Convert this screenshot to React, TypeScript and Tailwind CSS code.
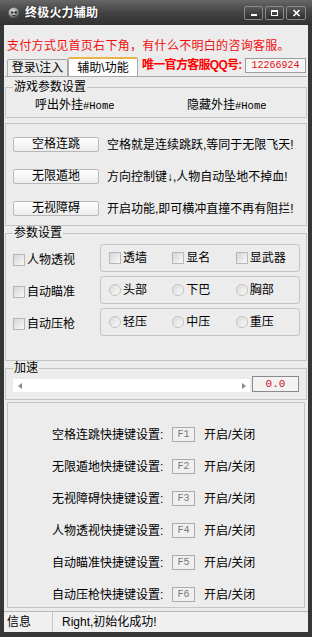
import React from "react";

function GroupHeader({ title }: { title: string }) {
  return (
    <div className="h-[14px] flex">
      <div className="w-[8px] h-[7px] self-end border-l border-t border-[#c4c4c4]" />
      <span className="px-[1px] leading-[14px] text-[12px] whitespace-nowrap">{title}</span>
      <div className="flex-1 h-[7px] self-end border-t border-r border-[#c4c4c4]" />
    </div>
  );
}

function Check() {
  return (
    <span className="inline-block w-[12px] h-[12px] shrink-0 border border-[#b8b8b8] bg-linear-to-br from-[#d6d6d6] to-[#f9f9f9]" />
  );
}

function Radio() {
  return (
    <span className="inline-block w-[12px] h-[12px] shrink-0 rounded-full border border-[#c2c2c2] bg-linear-to-br from-[#dadada] to-[#fbfbfb]" />
  );
}

function WinBtn({ children, w }: { children: React.ReactNode; w: string }) {
  return (
    <div
      className={
        w +
        " h-[14px] rounded-[2px] border border-[#8a8a8a] bg-linear-to-b from-[#585858] to-[#2f2f2f] flex items-center justify-center"
      }
    >
      {children}
    </div>
  );
}

export default function App() {
  const features = [
    ["空格连跳", "空格就是连续跳跃,等同于无限飞天!"],
    ["无限遁地", "方向控制键↓,人物自动坠地不掉血!"],
    ["无视障碍", "开启功能,即可横冲直撞不再有阻拦!"],
  ];
  const params: [string, string[], boolean][] = [
    ["人物透视", ["透墙", "显名", "显武器"], true],
    ["自动瞄准", ["头部", "下巴", "胸部"], false],
    ["自动压枪", ["轻压", "中压", "重压"], false],
  ];
  const hotkeys = [
    ["空格连跳快捷键设置:", "F1"],
    ["无限遁地快捷键设置:", "F2"],
    ["无视障碍快捷键设置:", "F3"],
    ["人物透视快捷键设置:", "F4"],
    ["自动瞄准快捷键设置:", "F5"],
    ["自动压枪快捷键设置:", "F6"],
  ];

  return (
    <div className="w-[312px] h-[637px] bg-[#363636] flex flex-col overflow-hidden font-['Liberation_Sans','Noto_Sans_CJK_SC',sans-serif] text-[12px] leading-[14px] text-black">
      {/* Title bar */}
      <div className="h-[25px] shrink-0 flex items-center bg-linear-to-b from-[#676767] via-[#434343] to-[#323232]">
        <div className="ml-[8px] w-[12px] h-[12px]">
          <svg width="12" height="12" viewBox="0 0 12 12">
            <defs>
              <radialGradient id="ig" cx="40%" cy="35%" r="65%">
                <stop offset="0" stopColor="#f2f2f2" />
                <stop offset="0.55" stopColor="#a0a0a0" />
                <stop offset="1" stopColor="#3a3a3a" />
              </radialGradient>
            </defs>
            <circle cx="6" cy="6" r="5.6" fill="url(#ig)" />
            <circle cx="4.3" cy="5.4" r="1.2" fill="#222" />
            <circle cx="7.7" cy="5.4" r="1.2" fill="#222" />
            <rect x="4.5" y="8" width="3" height="1.2" fill="#333" />
          </svg>
        </div>
        <span className="ml-[5px] text-white font-bold text-[12px] leading-[14px] tracking-[0.2px] [text-shadow:0_0_2px_rgba(0,0,0,0.6)]">
          终极火力辅助
        </span>
        <div className="ml-auto mr-[6px] flex items-center gap-[2px] pt-[1px]">
          <WinBtn w="w-[19px]">
            <svg width="8" height="8" viewBox="0 0 8 8">
              <rect x="1" y="5" width="6" height="2" fill="#fff" />
            </svg>
          </WinBtn>
          <WinBtn w="w-[19px]">
            <svg width="9" height="8" viewBox="0 0 9 8">
              <rect x="1.5" y="1.5" width="6" height="5" fill="none" stroke="#fff" strokeWidth="1" />
              <rect x="1" y="1" width="7" height="2" fill="#fff" />
            </svg>
          </WinBtn>
          <WinBtn w="w-[20px]">
            <svg width="9" height="8" viewBox="0 0 9 8">
              <path d="M1.5 1 L7.5 7 M7.5 1 L1.5 7" stroke="#fff" strokeWidth="1.7" />
            </svg>
          </WinBtn>
        </div>
      </div>

      {/* Client */}
      <div className="mx-[4px] h-[607px] shrink-0 bg-[#ececec] flex flex-col">
        <div className="h-[32px] pl-[3px] pt-[14px] text-[#f20d0d] text-[12px] leading-[14px] tracking-[0.3px] whitespace-nowrap">
          支付方式见首页右下角，有什么不明白的咨询客服。
        </div>

        {/* Tabs */}
        <div className="h-[19px] flex items-end">
          <div className="ml-[3px] w-[61px] h-[17px] border border-b-0 border-[#a8a8a8] bg-[#ececec] rounded-t-[2px] flex items-center justify-center whitespace-nowrap">
            {"登录\\注入"}
          </div>
          <div className="w-[70px] h-[19px] border border-b-0 border-[#a8a8a8] border-t-[#e8b54a] border-t-[2px] bg-white rounded-t-[2px] flex items-center justify-center whitespace-nowrap">
            {"辅助\\功能"}
          </div>
          <div className="self-start mt-[1px] ml-[4px] w-[101px] h-[15px] font-bold text-[#f00] leading-[15px] tracking-[-0.7px] whitespace-nowrap">
            唯一官方客服QQ号:
          </div>
          <div className="self-start mt-[1px] ml-[2px] w-[61px] h-[15px] border border-[#9c9c9c] bg-[#f6f6f6] flex items-center justify-center text-[#e01010] font-['Liberation_Mono',monospace] text-[10px] leading-[13px]">
            12266924
          </div>
        </div>

        {/* Tab panel */}
        <div className="mx-[1px] h-[533px] border-t border-[#a8a8a8] flex flex-col">
          {/* Group A */}
          <div className="mt-[3px]">
            <GroupHeader title="游戏参数设置" />
            <div className="h-[24px] border-l border-r border-b border-[#c4c4c4] flex items-center pl-[29px]">
              <div className="w-[152px] whitespace-nowrap">
                呼出外挂<span className="font-['Liberation_Mono',monospace] text-[10.5px]">#Home</span>
              </div>
              <div className="whitespace-nowrap">
                隐藏外挂<span className="font-['Liberation_Mono',monospace] text-[10.5px]">#Home</span>
              </div>
            </div>
          </div>

          {/* Box B */}
          <div className="mt-[5px] h-[103px] border border-[#c4c4c4] flex flex-col pt-[13px] gap-[17px] pl-[7px]">
            {features.map(([b, d]) => (
              <div key={b} className="h-[15px] flex items-center">
                <div className="w-[86px] h-[15px] border border-[#b8b8b8] rounded-[2px] bg-linear-to-b from-white to-[#ececec] flex items-center justify-center leading-[13px]">
                  {b}
                </div>
                <span className="ml-[8px] whitespace-nowrap">{d}</span>
              </div>
            ))}
          </div>

          {/* Group C */}
          <GroupHeader title="参数设置" />
          <div className="h-[121px] border-l border-r border-b border-[#c4c4c4] flex flex-col pt-[4px] gap-[4px]">
            {params.map(([label, opts, isCheck]) => (
              <div key={label} className="h-[28px] flex items-center">
                <div className="w-[94px] pl-[7px] flex items-center gap-[2px] pt-[3px]">
                  <Check />
                  <span className="whitespace-nowrap">{label}</span>
                </div>
                <div className="w-[200px] h-[28px] border border-[#c4c4c4] rounded-[3px] flex items-center pl-[8px]">
                  {opts.map((o) => (
                    <div key={o} className="w-[64px] flex items-center gap-[2px]">
                      {isCheck ? <Check /> : <Radio />}
                      <span className="whitespace-nowrap">{o}</span>
                    </div>
                  ))}
                </div>
              </div>
            ))}
          </div>

          {/* Group D */}
          <GroupHeader title="加速" />
          <div className="h-[25px] border-l border-r border-b border-[#c4c4c4] flex items-start pt-[1px] pl-[7px]">
            <div className="mt-[3px] w-[237px] h-[13px] bg-white flex items-center justify-between pl-[5px] pr-[4px]">
              <svg width="4" height="6" viewBox="0 0 4 6">
                <path d="M4 0 L0 3 L4 6 Z" fill="#8a8a8a" />
              </svg>
              <svg width="4" height="6" viewBox="0 0 4 6">
                <path d="M0 0 L4 3 L0 6 Z" fill="#8a8a8a" />
              </svg>
            </div>
            <div className="ml-[2px] w-[47px] h-[16px] border border-[#8a8a8a] bg-[#f3f3f3] flex items-center justify-center text-[#c8102e] font-['Liberation_Mono',monospace] text-[11px] leading-[13px]">
              0.0
            </div>
          </div>

          {/* Box E */}
          <div className="mt-[2px] mx-[2px] h-[206px] border border-[#c4c4c4] flex flex-col pt-[24px] gap-[17px] pl-[44px]">
            {hotkeys.map(([t, k]) => (
              <div key={k} className="h-[15px] flex items-center">
                <span className="w-[120px] whitespace-nowrap">{t}</span>
                <div className="w-[23px] h-[15px] border border-[#ababab] bg-[#efefef] flex items-center justify-center text-[#7a7a7a] font-['Liberation_Mono',monospace] text-[10px] leading-[13px]">
                  {k}
                </div>
                <span className="ml-[9px] whitespace-nowrap">开启/关闭</span>
              </div>
            ))}
          </div>
        </div>

        {/* Status bar */}
        <div className="mt-[2px] h-[21px] border-t border-[#b8b8b8] bg-[#f0f0f0] flex items-center">
          <div className="w-[49px] h-full pl-[3px] border-r border-[#c4c4c4] flex items-center">信息</div>
          <div className="pl-[9px] whitespace-nowrap">Right,初始化成功!</div>
        </div>
      </div>
    </div>
  );
}
